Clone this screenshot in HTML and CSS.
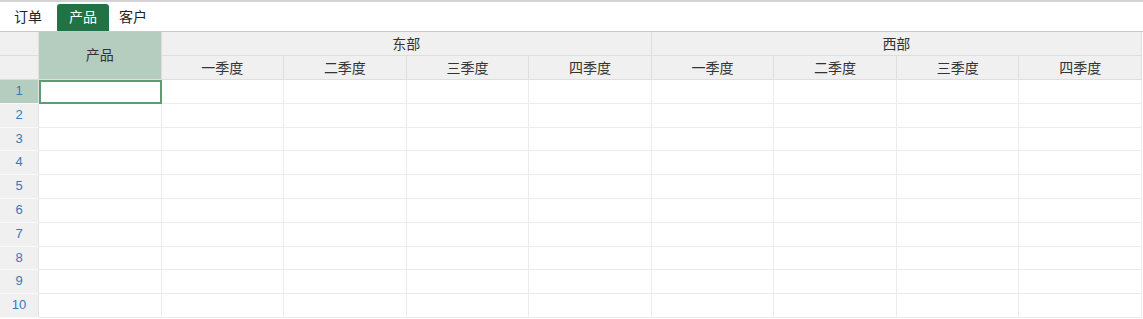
FILE: index.html
```html
<!DOCTYPE html>
<html lang="zh">
 <head>
	<title>spread</title>
	<meta charset="utf-8"/>
	<link rel="stylesheet" href="styles.css">
 </head>
 <body>
	<div id="wrap">
		<div id="tabBar">
			<p class="tab">订单</p>
			<p class="tab on">产品</p>
			<p class="tab">客户</p>
		</div>
		<div id="sheet">
			<div class="corner"></div>
			<div class="head prod sel">产品</div>
			<div class="head east">东部</div>
			<div class="head west">西部</div>
			<div class="corner"></div>
			<div class="head">一季度</div>
			<div class="head">二季度</div>
			<div class="head">三季度</div>
			<div class="head">四季度</div>
			<div class="head">一季度</div>
			<div class="head">二季度</div>
			<div class="head">三季度</div>
			<div class="head">四季度</div>
		</div>
	</div>
	<script>
		/* 데이터 행 10개 생성 */
		var sheet = document.getElementById("sheet");
		for (var r = 1; r <= 10; r++) {
			var num = document.createElement("div");
			num.className = "num" + (r == 1 ? " sel" : "");
			num.textContent = r;
			sheet.appendChild(num);
			for (var c = 0; c < 9; c++) {
				var cell = document.createElement("div");
				cell.className = "cell" + (r == 1 && c == 0 ? " active" : "");
				sheet.appendChild(cell);
			}
		}
	</script>
 </body>
</html>
```

FILE: styles.css
```css
*{margin:0; padding:0; box-sizing:border-box;}
body{font-family:"Noto Sans CJK SC", "Noto Sans", sans-serif; color:#333; background:#fff;}

/*######## wrap ########*/
	#wrap{width:1143px;}

/*######## tabBar ########*/
	#tabBar{height:32px; border-top:2px solid #d3d3d3; border-bottom:1px solid #c9c9c9; padding:2px 0 0 4px; display:flex; align-items:flex-end;}
	#tabBar .tab{height:27px; line-height:25px; padding:0 10px; font-size:14px; color:#222;}
	#tabBar .on{margin-left:5px; padding:0 12px; background-color:#217346; color:#fff; border-radius:3px 3px 0 0;}

/*######## sheet (grid) ########*/
/* 행머리 38px + 9칸 동일 너비 */
	#sheet{width:1142px; display:grid; grid-template-columns:39px repeat(9, 1fr); grid-template-rows:24px 24px repeat(10, 23.8px);}

	#sheet .corner{background-color:#f0f0f0; border-right:1px solid #e0e0e0; border-bottom:1px solid #dcdcdc;}
	#sheet .head{background-color:#f0f0f0; border-right:1px solid #dedede; border-bottom:1px solid #dedede; font-size:14px; line-height:22px; text-align:center; color:#333;}
	#sheet .prod{grid-row:span 2; display:flex; align-items:center; justify-content:center; padding-bottom:4px;}
	#sheet .east, #sheet .west{grid-column:span 4;}
	#sheet .sel{background-color:#b5cdbf;}

	#sheet .num{background-color:#f0f0f0; border-right:1px solid #e2e2e2; border-bottom:1px solid #f9f9f9; font-family:"Liberation Sans", sans-serif; font-size:13px; color:#3b78b5; text-align:center; line-height:22px;}
	#sheet .num.sel{background-color:#b5cdbf;}

	#sheet .cell{border-right:1px solid #ececec; border-bottom:1px solid #ececec; background:#fff;}
	#sheet .active{border:2px solid #5c9c75;}
```
